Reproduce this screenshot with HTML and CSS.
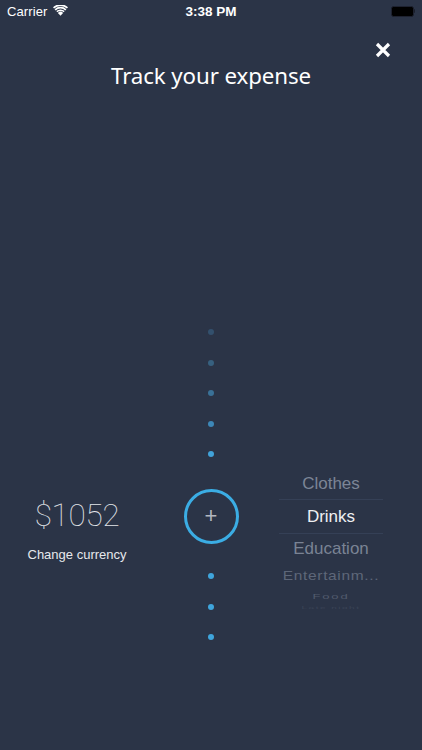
FILE: index.html
```html
<!DOCTYPE html>
<html>
<head>
<meta charset="utf-8">
<link rel="stylesheet" href="styles.css">
</head>
<body>
<div class="screen">
  <div class="status">
    <div class="carrier">Carrier
      <svg class="wifi" width="15" height="11" viewBox="0 0 15 11">
        <path d="M7.5 10.8 L4.9 7.9 A3.7 3.7 0 0 1 10.1 7.9 Z" fill="#fff"/>
        <path d="M3.3 6.1 A6 6 0 0 1 11.7 6.1 L10.6 7.3 A4.4 4.4 0 0 0 4.4 7.3 Z" fill="#fff"/>
        <path d="M1.6 4.2 A8.4 8.4 0 0 1 13.4 4.2 L12.3 5.4 A6.8 6.8 0 0 0 2.7 5.4 Z" fill="#fff"/>
        <path d="M0 2.3 A10.8 10.8 0 0 1 15 2.3 L13.9 3.5 A9.2 9.2 0 0 0 1.1 3.5 Z" fill="#fff"/>
      </svg>
    </div>
    <div class="time">3:38 PM</div>
    <div class="battery"><span class="batt-body"></span><span class="batt-nub"></span></div>
  </div>
  <div class="header">
    <button class="close" aria-label="Close">
      <svg width="16" height="16" viewBox="0 0 16 16"><path d="M2 2 L14 14 M14 2 L2 14" stroke="#fff" stroke-width="3.2" stroke-linecap="butt"/></svg>
    </button>
    <h1 class="title">Track your expense</h1>
  </div>
  <div class="main">
    <div class="dots top">
      <span class="dot d1"></span>
      <span class="dot d2"></span>
      <span class="dot d3"></span>
      <span class="dot d4"></span>
      <span class="dot d5"></span>
    </div>
    <div class="row">
      <div class="amount-block">
        <div class="amount">$1052</div>
        <div class="currency">Change currency</div>
      </div>
      <div class="add-wrap">
        <div class="add"><span class="plus">+</span></div>
      </div>
      <div class="picker">
        <div class="item clothes">Clothes</div>
        <div class="item selected">Drinks</div>
        <div class="item education">Education</div>
        <div class="item ent"><span>Entertainm...</span></div>
        <div class="item food"><span>Food</span></div>
        <div class="item last"><span>Late night</span></div>
      </div>
    </div>
    <div class="dots bottom">
      <span class="dot d6"></span>
      <span class="dot d6"></span>
      <span class="dot d6"></span>
    </div>
  </div>
</div>
</body>
</html>
```
FILE: styles.css
```css
* { box-sizing: border-box; }
html, body { margin: 0; padding: 0; }
body {
  background: #2b3447;
  font-family: "Liberation Sans", Arial, sans-serif;
  color: #fff;
}
.screen {
  width: 422px;
  height: 750px;
  background: #2b3447;
  overflow: hidden;
}
.status {
  height: 22px;
  display: grid;
  grid-template-columns: 1fr auto 1fr;
  align-items: center;
  padding: 0 7px;
  font-size: 13px;
}
.carrier {
  display: flex;
  align-items: center;
  gap: 6px;
  color: #fff;
  letter-spacing: 0.1px;
}
.wifi { margin-top: -1px; }
.time {
  font-weight: bold;
  font-size: 13.5px;
  color: #fff;
}
.battery {
  justify-self: end;
  display: flex;
  align-items: center;
}
.batt-body {
  width: 23px;
  height: 11px;
  background: #000;
  border: 1px solid #1e2230;
  border-radius: 2.5px;
}
.batt-nub {
  width: 1.5px;
  height: 4px;
  background: #1a1f2b;
  border-radius: 0 1px 1px 0;
}
.header {
  display: flex;
  flex-direction: column;
  align-items: center;
}
.close {
  align-self: flex-end;
  margin: 20px 31px 0 0;
  width: 16px;
  height: 16px;
  padding: 0;
  border: 0;
  background: none;
  display: block;
}
.close svg { display: block; }
.title {
  margin: 4px 0 0;
  font-family: "Noto Sans", "Liberation Sans", sans-serif;
  font-weight: normal;
  font-size: 22.3px;
  line-height: 28px;
  color: #fff;
  letter-spacing: -0.1px;
}
.main {
  padding-top: 239px;
  display: flex;
  flex-direction: column;
}
.dots {
  display: flex;
  flex-direction: column;
  align-items: center;
  gap: 24.5px;
}
.dot {
  width: 6px;
  height: 6px;
  border-radius: 50%;
  background: #42a6dd;
}
.d1 { background: #33506d; }
.d2 { background: #37607f; }
.d3 { background: #3a7197; }
.d4 { background: #3d87b7; }
.d5 { background: #41a2d9; }
.d6 { background: #3fa5dc; }
.row {
  display: grid;
  grid-template-columns: 154px 114px 126px;
  grid-template-rows: 56px;
  margin: 31px 0 29px;
}
.amount-block {
  display: flex;
  flex-direction: column;
  align-items: center;
}
.amount {
  font-family: Roboto, "Liberation Sans", sans-serif;
  font-weight: 100;
  font-size: 31.5px;
  line-height: 56px;
  color: #e3e6ea;
  letter-spacing: -0.3px;
}
.currency {
  margin-top: 3px;
  font-size: 13px;
  line-height: 16px;
  color: #e6e8ec;
}
.add-wrap {
  display: flex;
  justify-content: center;
  align-items: center;
}
.add {
  width: 55px;
  height: 55px;
  border-radius: 50%;
  border: 3px solid #3badE4;
  display: flex;
  align-items: center;
  justify-content: center;
}
.plus {
  font-family: "Liberation Sans", sans-serif;
  font-size: 22px;
  line-height: 22px;
  color: #b3b8c0;
  margin-top: -1px;
}
.picker {
  align-self: start;
  margin-top: -20px;
  display: flex;
  flex-direction: column;
  align-items: center;
  width: 104px;
  justify-self: center;
}
.item {
  width: 100%;
  text-align: center;
  font-size: 17px;
  height: 32px;
  line-height: 32px;
  color: #7c8596;
  white-space: nowrap;
}
.selected {
  color: #eef0f3;
  height: 35px;
  line-height: 33px;
  border-top: 1px solid #354056;
  border-bottom: 1px solid #354056;
  margin-top: -1px;
}
.education { height: 30px; line-height: 30px; color: #7a8394; }
.ent {
  height: 24px;
  line-height: 24px;
  color: #5e6779;
}
.ent span {
  display: inline-block;
  font-size: 15.5px;
  letter-spacing: 0.65px;
  transform: scaleY(0.88);
}
.food {
  height: 15px;
  line-height: 15px;
  color: #525b6d;
}
.food span {
  display: inline-block;
  font-size: 13px;
  letter-spacing: 1.8px;
  transform: scaleY(0.62);
}
.last {
  height: 6px;
  line-height: 6px;
  color: #3a4356;
  overflow: hidden;
}
.last span {
  display: inline-block;
  font-size: 10px;
  letter-spacing: 1.5px;
  transform: scaleY(0.4);
}
```
